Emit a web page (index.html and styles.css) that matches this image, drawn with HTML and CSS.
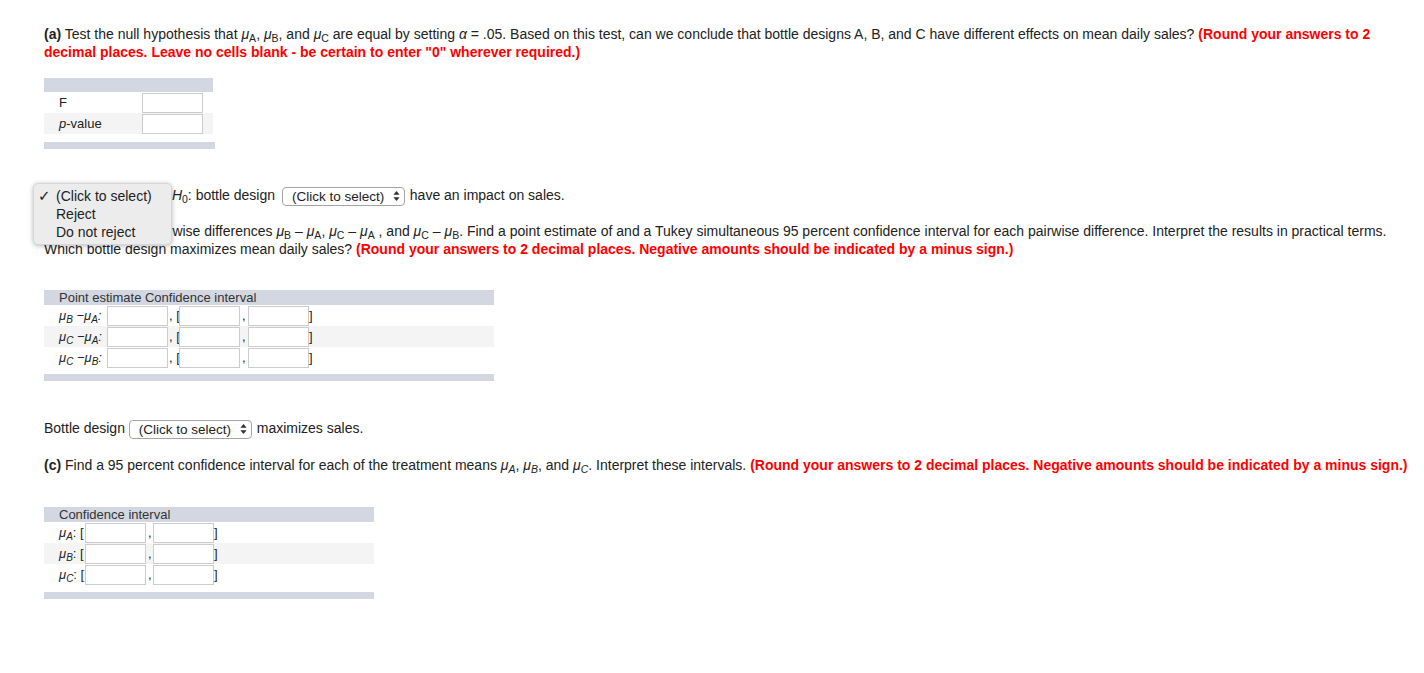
FILE: index.html
```html
<!DOCTYPE html>
<html>
<head>
<meta charset="utf-8">
<title>ANOVA</title>
<link rel="stylesheet" href="styles.css">
</head>
<body>
<div class="page">
  <p class="q q-a"><span class="b">(a)</span> Test the null hypothesis that <span class="mu">μ</span><sub>A</sub>, <span class="mu">μ</span><sub>B</sub>, and <span class="mu">μ</span><sub>C</sub> are equal by setting <span class="mu">α</span> = .05. Based on this test, can we conclude that bottle designs A, B, and C have different effects on mean daily sales? <span class="red">(Round your answers to 2 decimal places. Leave no cells blank - be certain to enter "0" wherever required.)</span></p>

  <div class="grid grid1">
    <div class="grid-head"></div>
    <div class="row"><span class="lab lab1">F</span><span class="field"></span></div>
    <div class="row alt"><span class="lab lab1"><i>p</i>-value</span><span class="field"></span></div>
    <div class="grid-foot foot1"></div>
  </div>

  <div class="h0line">
    <span class="sel"><span class="sel-text">(Click to select)</span><svg class="sel-arrows" width="7" height="10" viewBox="0 0 7 10"><path d="M3.5 0 L6.6 3.8 H0.4 Z M0.4 6.2 H6.6 L3.5 10 Z" fill="#333"/></svg></span> <i>H</i><sub>0</sub>: bottle design <span class="sel sel-h0"><span class="sel-text">(Click to select)</span><svg class="sel-arrows" width="7" height="10" viewBox="0 0 7 10"><path d="M3.5 0 L6.6 3.8 H0.4 Z M0.4 6.2 H6.6 L3.5 10 Z" fill="#333"/></svg></span> have an impact on sales.
    <div class="menu">
      <div class="menu-item"><span class="check">✓</span>(Click to select)</div>
      <div class="menu-item">Reject</div>
      <div class="menu-item">Do not reject</div>
    </div>
  </div>

  <p class="q q-b"><span class="b">(b)</span> Consider the pairwise differences <span class="mu">μ</span><sub>B</sub> – <span class="mu">μ</span><sub>A</sub>, <span class="mu">μ</span><sub>C</sub> – <span class="mu">μ</span><sub>A</sub> , and <span class="mu">μ</span><sub>C</sub> – <span class="mu">μ</span><sub>B</sub>. Find a point estimate of and a Tukey simultaneous 95 percent confidence interval for each pairwise difference. Interpret the results in practical terms. Which bottle design maximizes mean daily sales? <span class="red">(Round your answers to 2 decimal places. Negative amounts should be indicated by a minus sign.)</span></p>

  <div class="grid grid2">
    <div class="grid-head head-text">Point estimate Confidence interval</div>
    <div class="row"><span class="lab lab2 it">μ<sub>B</sub> −μ<sub>A</sub>:</span><span class="field"></span><span class="sep sep-a">, [</span><span class="field"></span><span class="sep sep-b">,</span><span class="field"></span><span class="sep">]</span></div>
    <div class="row alt"><span class="lab lab2 it">μ<sub>C</sub> −μ<sub>A</sub>:</span><span class="field"></span><span class="sep sep-a">, [</span><span class="field"></span><span class="sep sep-b">,</span><span class="field"></span><span class="sep">]</span></div>
    <div class="row"><span class="lab lab2 it">μ<sub>C</sub> −μ<sub>B</sub>:</span><span class="field"></span><span class="sep sep-a">, [</span><span class="field"></span><span class="sep sep-b">,</span><span class="field"></span><span class="sep">]</span></div>
    <div class="grid-foot foot2"></div>
  </div>

  <div class="bdline">Bottle design <span class="sel"><span class="sel-text">(Click to select)</span><svg class="sel-arrows" width="7" height="10" viewBox="0 0 7 10"><path d="M3.5 0 L6.6 3.8 H0.4 Z M0.4 6.2 H6.6 L3.5 10 Z" fill="#333"/></svg></span> maximizes sales.</div>

  <p class="q q-c"><span class="b">(c)</span> Find a 95 percent confidence interval for each of the treatment means <span class="mu">μ<sub>A</sub></span>, <span class="mu">μ<sub>B</sub></span>, and <span class="mu">μ<sub>C</sub></span>. Interpret these intervals. <span class="red">(Round your answers to 2 decimal places. Negative amounts should be indicated by a minus sign.)</span></p>

  <div class="grid grid3">
    <div class="grid-head head-text">Confidence interval</div>
    <div class="row"><span class="lab lab3"><span class="it">μ<sub>A</sub></span>: [</span><span class="field"></span><span class="sep sep-c">,</span><span class="field"></span><span class="sep">]</span></div>
    <div class="row alt"><span class="lab lab3"><span class="it">μ<sub>B</sub></span>: [</span><span class="field"></span><span class="sep sep-c">,</span><span class="field"></span><span class="sep">]</span></div>
    <div class="row"><span class="lab lab3"><span class="it">μ<sub>C</sub></span>: [</span><span class="field"></span><span class="sep sep-c">,</span><span class="field"></span><span class="sep">]</span></div>
    <div class="grid-foot foot3"></div>
  </div>
</div>
</body>
</html>
```

FILE: styles.css
```css
* { box-sizing: border-box; }
html, body { margin: 0; padding: 0; background: #fff; }
body {
  font-family: "Liberation Sans", Arial, Helvetica, sans-serif;
  font-size: 14px;
  line-height: 18px;
  color: #222;
}
.page { padding: 25px 8px 40px 44px; }
p { margin: 0; }
.b { font-weight: bold; }
.red { color: #f00; font-weight: bold; }
.mu, .it { font-style: italic; }
i { font-style: italic; }
sub { font-size: 10.5px; vertical-align: -3px; line-height: 0; }

.grid { font-size: 13px; }
.grid sub { font-size: 10px; }
.grid-head { background: #d2d7e1; height: 14px; }
.head-text { height: 15px; line-height: 15px; padding-left: 15px; color: #333; }
.grid-foot { background: #d2d7e1; height: 7px; }
.row { display: flex; align-items: center; height: 21px; }
.row.alt { background: #f4f4f4; }
.lab { padding-left: 15px; flex: none; white-space: nowrap; }
.field {
  flex: none;
  width: 61px;
  height: 20px;
  border: 1px solid #cccccc;
  background: #fff;
  align-self: flex-end;
}
.sep { flex: none; white-space: nowrap; }
.sep-a { width: 11px; padding-left: 1px; }
.sep-b { width: 8px; padding-left: 2px; }
.sep-c { width: 7px; padding-left: 2px; }

.grid1 { margin-top: 17px; width: 169px; }
.lab1 { width: 98px; }
.foot1 { margin-top: 8px; width: 171px; }

.grid2 { margin-top: 32px; width: 450px; }
.lab2 { width: 63px; }
.foot2 { margin-top: 6px; }

.grid3 { margin-top: 33px; width: 330px; }
.lab3 { width: 41px; }
.foot3 { margin-top: 7px; }

.sel {
  display: inline-flex;
  align-items: center;
  justify-content: space-between;
  width: 123px;
  height: 19px;
  margin: -1px 1px -1px 0;
  padding: 0 4px 0 9px;
  border: 1px solid #a4a4a4;
  border-radius: 4px;
  background: #fff;
  vertical-align: middle;
  font-size: 13.5px;
  line-height: 17px;
  color: #222;
}
.sel-h0 { margin-left: 3px; }
.sel-arrows { display: block; }

.h0line { position: relative; margin-top: 37px; height: 18px; }
.menu {
  position: absolute;
  left: -11px;
  top: -3px;
  width: 139px;
  height: 62px;
  padding-top: 3px;
  background: #ececec;
  border: 1px solid #d6d6d6;
  border-radius: 5px;
  box-shadow: 0 1px 5px rgba(0, 0, 0, 0.28);
}
.menu-item { position: relative; height: 18px; line-height: 18px; padding-left: 22px; color: #222; white-space: nowrap; }
.check { position: absolute; left: 4px; top: 0; font-size: 15px; font-family: "DejaVu Sans", sans-serif; }

.q-b { margin-top: 18px; }
.bdline { margin-top: 38px; height: 18px; }
.q-c { margin-top: 19px; }
```
